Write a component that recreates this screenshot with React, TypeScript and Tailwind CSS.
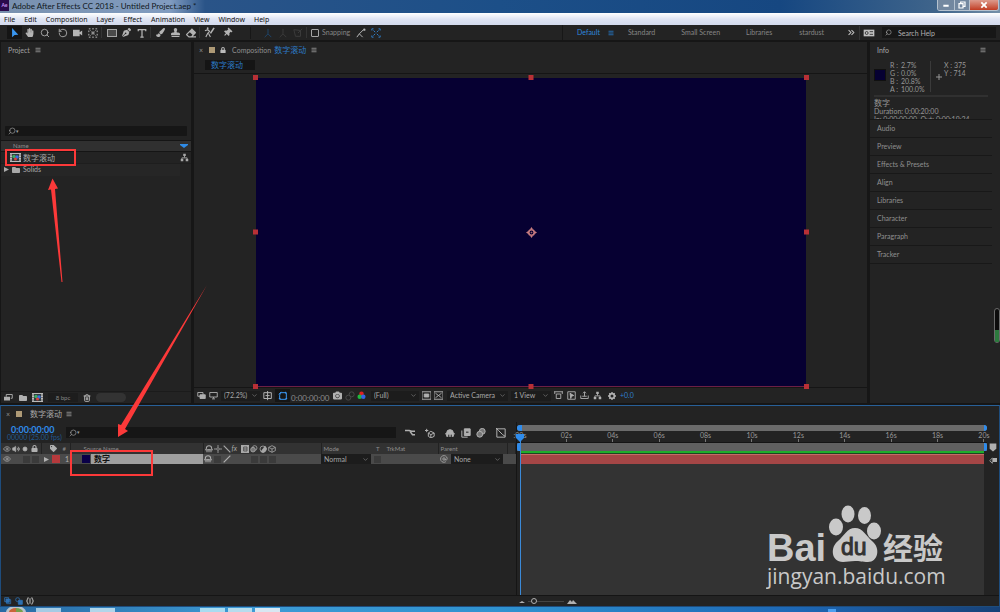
import type { ReactNode } from 'react';
import { ChevronDown, Eye, RotateCcw, Search, Trash2, Volume2 } from 'lucide-react';
import {
  FaCamera,
  FaEraser,
  FaFolder,
  FaHandPaper,
  FaLock,
  FaPaintBrush,
  FaPenNib,
  FaStamp,
  FaTag,
  FaThumbtack,
} from 'react-icons/fa';

const menus = ['File', 'Edit', 'Composition', 'Layer', 'Effect', 'Animation', 'View', 'Window', 'Help'];
const sidePanels = ['Audio', 'Preview', 'Effects & Presets', 'Align', 'Libraries', 'Character', 'Paragraph', 'Tracker'];
const rulerMarks = [':00s', '02s', '04s', '06s', '08s', '10s', '12s', '14s', '16s', '18s', '20s'];
const channels = [
  ['R', '2.7%'],
  ['G', '0.0%'],
  ['B', '20.8%'],
  ['A', '100.0%'],
];

type IconProps = { children: ReactNode; className?: string };

// Small 12x12 line glyph in the current colour
const Glyph = ({ children, className = 'size-[10px]' }: IconProps) => (
  <svg viewBox="0 0 12 12" className={`${className} shrink-0`} fill="none" stroke="currentColor" strokeWidth="1.2">
    {children}
  </svg>
);

const MenuLines = ({ className = 'text-[#858585]' }: { className?: string }) => (
  <Glyph className={`size-[6px] ${className}`}>
    <path d="M1 2.5h10M1 6h10M1 9.5h10" strokeWidth="2" />
  </Glyph>
);

const CompIcon = ({ className = 'h-[9px] w-[11px]' }: { className?: string }) => (
  <svg viewBox="0 0 22 18" className={`${className} shrink-0`}>
    <rect width="22" height="18" fill="#b9b9b9" />
    <rect x="4" y="2" width="14" height="14" fill="#303b3e" />
    <path d="M1 3h2v2H1zM1 8h2v2H1zM1 13h2v2H1zM19 3h2v2h-2zM19 8h2v2h-2zM19 13h2v2h-2z" fill="#333" />
    <circle cx="8" cy="7" r="3.5" fill="#3cac61" />
    <circle cx="14" cy="8" r="3.5" fill="#396fe0" />
    <circle cx="11" cy="12" r="3" fill="#d9423c" />
  </svg>
);

const TreeIcon = () => (
  <Glyph className="size-[9px]">
    <path d="M6 3v3M2.5 9V6.5h7V9" />
    <path d="M4.3 1h3.4v3H4.3zM1 8h3.4v3H1zM7.6 8H11v3H7.6z" fill="currentColor" stroke="none" />
  </Glyph>
);

const ToolButton = ({ label, children, active }: { label: string; children: ReactNode; active?: boolean }) => (
  <button
    aria-label={label}
    className={`flex h-[13px] w-[15px] shrink-0 items-center justify-center ${active ? 'bg-[#151515] text-[#3a96f0]' : ''}`}
  >
    {children}
  </button>
);

const Divider = () => <span className="mx-px h-[11px] w-px bg-[#343434]" />;

const Dropdown = ({ label, value, className }: { label: string; value: string; className: string }) => (
  <label className={`relative flex h-[10px] shrink-0 items-center bg-[#1c1c1c] text-[#a8a8a8] ${className}`}>
    <select aria-label={label} className="h-full w-full appearance-none bg-transparent pl-[3px] leading-none outline-none">
      <option>{value}</option>
    </select>
    <ChevronDown className="pointer-events-none absolute right-[2px] size-[7px] text-[#8a8a8a]" />
  </label>
);

const TitleBar = () => (
  <header className="flex h-[13px] items-start justify-between bg-[linear-gradient(90deg,#7890ae_0,#819cc0_170px,#2a5488_205px,#1c4f88_50%,#164781_78%,#40658b_94%,#7590a9_100%)]">
    <div className="flex items-center gap-[3px] text-[#101820]">
      <span className="flex h-[11px] w-[9px] items-center justify-center bg-[#2a0b4c] text-[5px] font-bold text-[#c896f5]">
        Ae
      </span>
      <h1 className="pt-[2px] text-[8px] leading-[9px]">Adobe After Effects CC 2018 - Untitled Project.aep *</h1>
    </div>
    <div className="mr-px flex h-[11px] overflow-hidden rounded-b-[3px] border border-t-0 border-[#b5c2cf] text-white">
      <button aria-label="Minimize" className="flex w-[17px] items-center justify-center border-r border-[#b5c2cf] bg-[#7388a0]">
        <Glyph className="size-[8px]">
          <path d="M2 7h8" strokeWidth="3" />
        </Glyph>
      </button>
      <button aria-label="Restore" className="flex w-[15px] items-center justify-center border-r border-[#b5c2cf] bg-[#7388a0]">
        <Glyph className="size-[8px]">
          <path d="M4 4V1.5h6.5V8H8M1.5 4h6v6.5h-6z" strokeWidth="1.8" />
        </Glyph>
      </button>
      <button aria-label="Close" className="flex w-[28px] items-center justify-center bg-linear-to-b from-[#dc9a8c] to-[#c03a20]">
        <Glyph className="size-[8px]">
          <path d="M2 2l8 8M10 2l-8 8" strokeWidth="2.6" />
        </Glyph>
      </button>
    </div>
  </header>
);

const MenuBar = () => (
  <nav className="flex h-[12px] items-center gap-[9px] bg-linear-to-b from-white via-[#dfe4f3] to-[#d3daed] pl-[4px] font-['Noto_Sans'] text-[7px] text-[#111]">
    {menus.map((menu) => (
      <button key={menu}>{menu}</button>
    ))}
  </nav>
);

const Toolbar = () => (
  <div className="flex h-[15px] items-center bg-[#232323] text-[#b4b4b4]">
    <div className="flex items-center pl-[7px]">
      <ToolButton label="Selection" active>
        <Glyph>
          <path d="M2.5 0v11l3-2.7L10 8z" fill="currentColor" stroke="none" />
        </Glyph>
      </ToolButton>
      <ToolButton label="Hand">
        <FaHandPaper className="size-[9px]" />
      </ToolButton>
      <ToolButton label="Zoom">
        <Search className="size-[10px]" />
      </ToolButton>
    </div>
    <div className="ml-[3px] flex items-center">
      <ToolButton label="Rotate">
        <RotateCcw className="size-[10px]" />
      </ToolButton>
      <ToolButton label="Camera">
        <Glyph className="h-[10px] w-[12px]">
          <path d="M0 2h8v3l3-2v6L8 7v3H0z" fill="currentColor" stroke="none" />
        </Glyph>
      </ToolButton>
      <ToolButton label="Pan Behind">
        <Glyph>
          <rect x="1" y="1" width="10" height="10" strokeDasharray="2 2" />
          <path d="M6 4v4M4 6h4M3 3l1 1M9 3L8 4M3 9l1-1M9 9L8 8" />
        </Glyph>
      </ToolButton>
    </div>
    <Divider />
    <div className="flex items-center pl-px">
      <ToolButton label="Rectangle">
        <span className="h-[8px] w-[10px] border border-[#a5a5a5] bg-[#4a4a4a]" />
      </ToolButton>
      <ToolButton label="Pen">
        <FaPenNib className="size-[9px]" />
      </ToolButton>
      <ToolButton label="Type">
        <Glyph>
          <path d="M1.5 4V1.8h9V4M6 1.8V11M4 10.8h4" strokeWidth="1.5" />
        </Glyph>
      </ToolButton>
    </div>
    <Divider />
    <div className="flex items-center pl-px">
      <ToolButton label="Brush">
        <FaPaintBrush className="size-[9px]" />
      </ToolButton>
      <ToolButton label="Clone Stamp">
        <FaStamp className="size-[9px]" />
      </ToolButton>
      <ToolButton label="Eraser">
        <FaEraser className="size-[10px]" />
      </ToolButton>
    </div>
    <Divider />
    <div className="flex items-center gap-[3px] pl-px">
      <ToolButton label="Roto Brush">
        <Glyph className="size-[11px]">
          <path d="M1 4l3-1 2 2-2 2-2 4M5 7l2 4M4 3l2 1" />
          <path d="M11 1L7 7" strokeWidth="1.8" />
          <circle cx="4" cy="1.3" r="1" fill="currentColor" stroke="none" />
        </Glyph>
      </ToolButton>
      <ToolButton label="Puppet Pin">
        <FaThumbtack className="size-[9px] rotate-45" />
      </ToolButton>
    </div>
    <span className="ml-[15px] h-[12px] w-px bg-[#171717]" />
    <div className="ml-[9px] flex text-[#3b3b3b]">
      <span className="text-[#1f4469]">
        <ToolButton label="Local Axis">
          <Glyph>
            <path d="M6 1v6L2 11M6 7l4 4" />
          </Glyph>
        </ToolButton>
      </span>
      <ToolButton label="World Axis">
        <Glyph>
          <path d="M6 1v6L2 11M6 7l4 4" />
        </Glyph>
      </ToolButton>
      <ToolButton label="View Axis">
        <Glyph>
          <path d="M1 2l8 1v7H3zM11 1L6 6" />
        </Glyph>
      </ToolButton>
    </div>
    <Divider />
    <label className="ml-[3px] flex items-center gap-[3px] text-[#858585]">
      <input type="checkbox" className="size-[8px] appearance-none rounded-[1px] border border-[#a5a5a5]" />
      Snapping
    </label>
    <div className="ml-[3px] flex">
      <ToolButton label="Snap Edges">
        <Glyph>
          <path d="M1 11l3-4 4 4M4 7l5-5" />
          <circle cx="10" cy="2" r="1.4" fill="currentColor" stroke="none" />
        </Glyph>
      </ToolButton>
      <span className="text-[#2f7cc6]">
        <ToolButton label="Snap Collapse">
          <Glyph>
            <path d="M1 3V1h2M9 1h2v2M11 9v2H9M3 11H1V9M3 3l2 2M9 3L7 5M3 9l2-2M9 9L7 7" />
          </Glyph>
        </ToolButton>
      </span>
    </div>
    <div className="ml-auto flex items-center text-[#858585]">
      <span className="h-[15px] w-px bg-[#171717]" />
      <button className="ml-[14px] text-[#2f88de]">Default</button>
      <MenuLines className="ml-[8px] text-[#2469a9]" />
      <button className="ml-[14px]">Standard</button>
      <button className="ml-[26px]">Small Screen</button>
      <button className="ml-[26px]">Libraries</button>
      <button className="ml-[27px]">stardust</button>
      <button aria-label="More workspaces" className="ml-[24px] text-[#c0c0c0]">
        <Glyph className="size-[7px]">
          <path d="M1 2l4 4-4 4M6 2l4 4-4 4" strokeWidth="1.8" />
        </Glyph>
      </button>
      <span className="mr-[3px] ml-[4px] h-[14px] w-px bg-[#353535]" />
      <Glyph className="h-[8px] w-[12px] text-[#c0c0c0]">
        <path d="M-2 1h16v10H-2z" fill="currentColor" stroke="none" />
        <circle cx="2.5" cy="6" r="2.2" stroke="#232323" />
        <path d="M7 4h5M7 8h5" stroke="#232323" />
      </Glyph>
      <label className="mr-[4px] ml-[7px] flex h-[11px] w-[114px] items-center gap-[6px] bg-[#171717] pl-[3px] text-[#b0b0b0]">
        <Search className="size-[7px] -scale-x-100" />
        <input aria-label="Search Help" placeholder="Search Help" className="w-20 bg-transparent placeholder:text-[#b0b0b0]" />
      </label>
    </div>
  </div>
);

const ProjectPanel = () => (
  <section className="flex w-[190px] shrink-0 flex-col bg-[#232323]">
    <div className="flex h-[16px] items-center gap-[5px] pl-[7px] text-[#a0a0a0]">
      <h2>Project</h2>
      <MenuLines />
    </div>
    <label className="mx-[4px] mt-[68px] mb-[4px] flex h-[10px] items-center rounded-[1px] bg-[#161616] pl-[3px]">
      <Search className="size-[8px] -scale-x-100 text-[#a0a0a0]" />
      <span className="text-[5px] text-[#a0a0a0]">▾</span>
      <input aria-label="Search project" className="min-w-0 flex-1 bg-transparent" />
    </label>
    <table className="w-full border-collapse border-t border-[#151515]">
      <thead>
        <tr className="h-[11px] border-b border-[#151515] bg-[#303030] text-left text-[6px] text-[#909090]">
          <th className="p-0 pl-[12px] font-normal">Name</th>
          <th className="w-[11px] p-0 text-[#2f8be6]">
            <svg viewBox="0 0 8 4" className="h-[4px] w-[8px]">
              <path d="M0 0h8v1L4 4 0 1z" fill="currentColor" />
            </svg>
          </th>
        </tr>
      </thead>
      <tbody className="text-[#a8a8a8]">
        <tr className="h-[12px] border-b border-[#1e1e1e]">
          <td className="p-0">
            <div className="flex items-center gap-[2px] pl-[9px]">
              <CompIcon />
              <span className="text-[8px]">数字滚动</span>
            </div>
          </td>
          <td className="p-0">
            <TreeIcon />
          </td>
        </tr>
        <tr className="h-[12px] bg-[#262626]">
          <td className="p-0">
            <div className="flex items-center gap-[3px] pl-[3px]">
              <Glyph className="size-[5px]">
                <path d="M0 0l12 6-12 6z" fill="currentColor" stroke="none" />
              </Glyph>
              <FaFolder className="size-[8px]" />
              <span>Solids</span>
            </div>
          </td>
          <td className="bg-[#232323] p-0" />
        </tr>
      </tbody>
    </table>
    <div className="mt-auto flex h-[12px] items-center gap-[5px] border-t border-[#1b1b1b] pl-[2px] text-[#b0b0b0]">
      <button aria-label="Interpret Footage">
        <Glyph className="h-[9px] w-[11px]">
          <path d="M3 5V2h8v5H9" />
          <path d="M0 5h8v5H0z" fill="currentColor" stroke="none" />
        </Glyph>
      </button>
      <button aria-label="New Folder">
        <FaFolder className="size-[8px]" />
      </button>
      <button aria-label="New Composition">
        <CompIcon />
      </button>
      <button className="h-[9px] w-[30px] bg-[#1d1d1d] text-[6px] text-[#858585]">8 bpc</button>
      <button aria-label="Delete">
        <Trash2 className="size-[8px]" strokeWidth={3} />
      </button>
      <span className="h-[9px] w-[30px] rounded-full bg-[#333]" />
    </div>
  </section>
);

const Handle = ({ className }: { className: string }) => <span className={`absolute size-[5px] bg-[#b83036] ${className}`} />;

const CompositionPanel = () => (
  <section className="flex min-w-0 flex-1 flex-col bg-[#232323]">
    <div className="flex h-[16px] items-center pl-[5px] text-[#909090]">
      <button aria-label="Close composition">×</button>
      <span className="ml-[6px] size-[6px] bg-[#ae9a76]" />
      <FaLock className="mr-[6px] ml-[5px] size-[6px] text-[#bbb]" />
      <h2>Composition</h2>
      <span className="mr-[5px] ml-[3px] text-[8px] text-[#2c7ac6]">数字滚动</span>
      <MenuLines />
    </div>
    <div className="h-[15px] pt-[2px] pl-[11px]">
      <button className="h-[10px] w-[50px] bg-[#151515] pr-[6px] text-[8px] text-[#2c7ac6]">数字滚动</button>
    </div>
    <div className="border-y border-[#151515] pt-[4px] pr-[61px] pl-[62px]">
      <div className="relative flex aspect-[550/309] items-center justify-center border-b border-[#6b1f45] bg-[#060032]">
        <Handle className="-top-[3px] -left-[3px]" />
        <Handle className="-top-[3px] left-1/2 -translate-x-1/2" />
        <Handle className="-top-[3px] -right-[3px]" />
        <Handle className="top-1/2 -left-[3px] -translate-y-1/2" />
        <Handle className="top-1/2 -right-[3px] -translate-y-1/2" />
        <Handle className="-bottom-[3px] -left-[3px]" />
        <Handle className="-bottom-[3px] left-1/2 -translate-x-1/2" />
        <Handle className="-right-[3px] -bottom-[3px]" />
        <Glyph className="size-[11px] text-[#c87c80]">
          <circle cx="6" cy="6" r="3" strokeWidth="1.8" />
          <path d="M6 0l1.6 2.5H4.4zM6 12l1.6-2.5H4.4zM0 6l2.5 1.6V4.4zM12 6L9.5 7.6V4.4z" fill="currentColor" stroke="none" />
          <path d="M6 5v2M5 6h2" strokeWidth="0.6" />
        </Glyph>
      </div>
    </div>
    <div className="flex flex-1 items-center overflow-hidden text-[#b0b0b0]">
      <ToolButton label="Always Preview">
        <Glyph className="size-[9px]">
          <path d="M1 2h7v5H1z" />
          <path d="M4 5h7v5H4z" fill="currentColor" />
        </Glyph>
      </ToolButton>
      <button aria-label="Primary Viewer" className="mr-[3px]">
        <Glyph className="size-[9px]">
          <path d="M1 2h10v6H1zM4 10.5h4M6 8v2" />
        </Glyph>
      </button>
      <Dropdown label="Magnification" value="(72.2%)" className="w-[39px]" />
      <ToolButton label="Grid Options">
        <Glyph>
          <path d="M1 2h9v7H1zM5.5 0v11M3 5.5h5" />
        </Glyph>
      </ToolButton>
      <ToolButton label="Mask Visibility" active>
        <Glyph>
          <path d="M3 2h7v8H2V5zM1 4l3-3M9 1v2M1 9h2M9 9h2" />
        </Glyph>
      </ToolButton>
      <button className="ml-px h-full w-[37px] pt-[4px] text-[8px] text-[#8b8b8b]">0:00:00:00</button>
      <span className="ml-[2px]">
        <ToolButton label="Snapshot">
          <FaCamera className="size-[9px]" />
        </ToolButton>
      </span>
      <span className="text-[#484848]">
        <Glyph>
          <circle cx="4" cy="8" r="3" />
          <circle cx="8" cy="4" r="3" />
        </Glyph>
      </span>
      <button aria-label="Channels" className="ml-[2px]">
        <svg viewBox="0 0 10 10" className="size-[9px]">
          <circle cx="5" cy="3" r="2.5" fill="#e02020" />
          <circle cx="3" cy="6.5" r="2.5" fill="#21b83e" />
          <circle cx="7" cy="6.5" r="2.5" fill="#3465e2" />
        </svg>
      </button>
      <span className="ml-[5px]">
        <Dropdown label="Resolution" value="(Full)" className="w-[48px]" />
      </span>
      <ToolButton label="Region of Interest">
        <Glyph className="size-[9px]">
          <path d="M0 1h12v10H0z" />
          <path d="M3 4h6v4H3z" fill="currentColor" />
        </Glyph>
      </ToolButton>
      <button aria-label="Transparency Grid" className="mr-[4px]">
        <Glyph className="size-[9px]">
          <path d="M0 1h12v10H0zM2 3l8 6M10 3L2 9" />
        </Glyph>
      </button>
      <Dropdown label="3D View" value="Active Camera" className="w-[61px]" />
      <span className="ml-[3px]">
        <Dropdown label="View Layout" value="1 View" className="w-[40px]" />
      </span>
      <span className="ml-[3px] flex gap-[4px]">
        <Glyph className="size-[9px]">
          <path d="M0 1h12M3 4h6v6H3zM1 1v3M11 1v3" />
        </Glyph>
        <Glyph className="size-[9px]">
          <path d="M1 1h10v10H1z" />
          <path d="M4 3l5 3-3 1-1 3z" fill="currentColor" />
        </Glyph>
        <Glyph className="size-[9px]">
          <path d="M1 6v4h10V6M3 7h6M6 1v6M4 3l2-2 2 2" />
        </Glyph>
        <TreeIcon />
      </span>
      <Glyph className="ml-[6px] size-[8px]">
        <circle cx="6" cy="6" r="3.5" strokeWidth="2.5" />
        <path d="M6 0v2M6 10v2M0 6h2M10 6h2M2 2l1 1M9 9l1 1M10 2L9 3M3 9l-1 1" strokeWidth="2" />
      </Glyph>
      <button className="ml-[4px] text-[#2f7fd0]">+0.0</button>
    </div>
  </section>
);

const InfoPanel = () => (
  <section className="relative flex w-[130px] shrink-0 flex-col bg-[#232323]">
    <div className="flex h-[16px] items-center justify-between pr-[14px] pl-[7px] text-[#a8a8a8]">
      <h2>Info</h2>
      <MenuLines />
    </div>
    <div className="mr-[8px] h-[62px] overflow-hidden border-b border-[#181818] px-[4px] pt-[3px] text-[#969696]">
      <div className="flex h-[34px] items-start leading-[8px]">
        <span className="mt-[8px] size-[12px] border border-[#101010] bg-[#060032]" />
        <dl className="ml-[4px] grid grid-cols-[11px_29px]">
          {channels.map(([name, value]) => (
            <div key={name} className="contents">
              <dt>{name} :</dt>
              <dd>{value}</dd>
            </div>
          ))}
        </dl>
        <span className="h-[31px] w-px bg-[#3a3a3a]" />
        <Glyph className="mt-[13px] ml-[5px] size-[6px]">
          <path d="M6 0v12M0 6h12" strokeWidth="2" />
        </Glyph>
        <p className="ml-[2px]">
          X : 375
          <br />Y : 714
        </p>
      </div>
      <div className="border-t-2 border-[#303030] pt-[2px] leading-[8px]">
        <p className="text-[8px]">数字</p>
        <p>Duration: 0:00:20:00</p>
        <p>In: 0:00:00:00, Out: 0:00:19:24</p>
      </div>
    </div>
    {sidePanels.map((panel) => (
      <h3 key={panel} className="mr-[8px] flex h-[18px] items-center border-b border-[#181818] pl-[7px] text-[#909090]">
        {panel}
      </h3>
    ))}
    <div className="absolute right-0 bottom-[60px] flex h-[35px] w-[6px] items-end rounded-full border border-[#6b6b6b] bg-[#0c0c0c]">
      <span className="h-[12px] w-full bg-[#2d7a3e]" />
    </div>
  </section>
);

const SwitchBox = () => <span className="size-[7px] bg-[#3b3b3b]" />;

const ShyIcon = () => (
  <Glyph className="size-[8px]">
    <path d="M2 6V5a4 4 0 018 0v1M0 7h12M3 8v3M9 8v3M6 6v5" strokeWidth="1.6" />
  </Glyph>
);

const LayerTable = () => (
  <table className="w-full table-fixed border-collapse">
    <colgroup>
      <col className="w-[40px]" />
      <col className="w-[29px]" />
      <col className="w-[133px]" />
      <col className="w-[118px]" />
      <col className="w-[53px]" />
      <col className="w-[64px]" />
      <col className="w-[69px]" />
      <col />
    </colgroup>
    <thead>
      <tr className="h-[11px] bg-[#323232] text-left text-[6px] text-[#8f8f8f] [&>th]:border-r [&>th]:border-[#222] [&>th]:p-0 [&>th]:font-normal">
        <th>
          <div className="flex items-center gap-px pl-[2px] text-[#b0b0b0]">
            <Eye className="size-[8px]" />
            <Volume2 className="size-[8px]" fill="currentColor" />
            <Glyph className="size-[8px]">
              <circle cx="6" cy="6" r="3" fill="currentColor" />
            </Glyph>
            <FaLock className="ml-px size-[7px]" />
          </div>
        </th>
        <th>
          <div className="flex items-center gap-[6px] pl-[8px]">
            <FaTag className="size-[7px] text-[#b0b0b0]" />#
          </div>
        </th>
        <th>
          <span className="pl-[13px]">Source Name</span>
        </th>
        <th>
          <div className="flex items-center gap-px pl-px text-[#a8a8a8]">
            <ShyIcon />
            <Glyph className="size-[8px]">
              <circle cx="6" cy="6" r="2" />
              <path d="M6 0v3M6 9v3M0 6h3M9 6h3" />
            </Glyph>
            <Glyph className="size-[8px]">
              <path d="M1 1l10 10" strokeWidth="1.8" />
            </Glyph>
            <span className="w-[8px] text-[7px] italic">fx</span>
            <Glyph className="size-[8px]">
              <path d="M0 0h12v12H0z" fill="currentColor" stroke="none" />
              <path d="M4 3h5v6H4zM4 6h5" stroke="#444" />
            </Glyph>
            <Glyph className="size-[8px]">
              <circle cx="7" cy="4.5" r="3.5" />
              <circle cx="4.5" cy="7" r="3.5" fill="#777" />
            </Glyph>
            <Glyph className="size-[8px]">
              <circle cx="6" cy="6" r="4.5" />
              <path d="M9 2a5 5 0 01-6 8z" fill="currentColor" />
            </Glyph>
            <Glyph className="size-[8px]">
              <path d="M6 1l5 2.5v5L6 11 1 8.5v-5zM1 3.5L6 6l5-2.500M6 6v5" />
            </Glyph>
          </div>
        </th>
        <th className="border-r-0!">
          <span className="pl-[2px]">Mode</span>
        </th>
        <th>
          <span className="pl-[2px]">T</span>
          <span className="pl-[7px]">TrkMat</span>
        </th>
        <th>
          <span className="pl-[2px]">Parent</span>
        </th>
        <th />
      </tr>
    </thead>
    <tbody>
      <tr className="h-[10px] bg-[#4a4a4a] text-[#b0b0b0] [&>td]:p-0">
        <td>
          <div className="flex items-center gap-[2px] pl-[2px]">
            <Eye className="mr-[10px] size-[8px]" />
            <SwitchBox />
            <SwitchBox />
          </div>
        </td>
        <td>
          <div className="flex items-center pl-[3px]">
            <Glyph className="size-[5px]">
              <path d="M0 0l12 6-12 6z" fill="currentColor" stroke="none" />
            </Glyph>
            <span className="mr-[5px] ml-[3px] size-[8px] bg-[#b5393c]" />1
          </div>
        </td>
        <td>
          <div className="flex h-[10px] items-center pl-[12px]">
            <span className="size-[8px] bg-[#0a0048]" />
            <span className="ml-px flex h-full flex-1 items-center bg-[#9f9f9f] pl-[3px] text-[8px] font-bold text-[#111]">数字</span>
          </div>
        </td>
        <td>
          <div className="flex items-center gap-[2px] pl-px">
            <ShyIcon />
            <SwitchBox />
            <Glyph className="mr-[18px] size-[8px]">
              <path d="M1 11L11 1" strokeWidth="1.8" />
            </Glyph>
            <SwitchBox />
            <SwitchBox />
            <SwitchBox />
          </div>
        </td>
        <td>
          <Dropdown label="Blending Mode" value="Normal" className="w-[50px]" />
        </td>
        <td>
          <div className="flex">
            <SwitchBox />
          </div>
        </td>
        <td>
          <div className="flex items-center gap-[3px] pl-[2px]">
            <Glyph className="size-[8px]">
              <circle cx="6" cy="6" r="1.8" />
              <path d="M7.800 6c0 3 3 2 3-1a5 5 0 10-2 5" />
            </Glyph>
            <Dropdown label="Parent" value="None" className="w-[52px]" />
          </div>
        </td>
        <td />
      </tr>
    </tbody>
  </table>
);

const TimelinePanel = () => (
  <section className="flex flex-1 flex-col border border-[#1e4c7c] border-t-[#286098] bg-[#232323]">
    <div className="flex h-[16px] items-center pl-[5px] text-[#909090]">
      <button aria-label="Close timeline">×</button>
      <span className="mr-[8px] ml-[6px] size-[6px] bg-[#ae9a76]" />
      <h2 className="mr-[4px] text-[8px] text-[#a8a8a8]">数字滚动</h2>
      <MenuLines />
    </div>
    <div className="flex flex-1">
      <div className="flex w-[515px] shrink-0 flex-col">
        <div className="flex h-[21px] items-center">
          <div className="w-[65px] pl-[6px] text-[#2f8cec]">
            <p className="pl-[4px] text-[9px] leading-[9px] font-bold">0:00:00:00</p>
            <p className="text-[7px] leading-[7px] whitespace-nowrap text-[#20588f]">00000 (25.00 fps)</p>
          </div>
          <label className="flex h-[11px] w-[330px] items-center bg-[#161616] pl-[3px] text-[#a0a0a0]">
            <Search className="size-[8px] -scale-x-100" />
            <span className="text-[5px]">▾</span>
            <input aria-label="Search layers" className="min-w-0 flex-1 bg-transparent" />
          </label>
          <div className="ml-[9px] flex text-[#b0b0b0]">
            <button aria-label="Mini Flowchart" className="mr-[10px]">
              <Glyph>
                <path d="M0 3h5l3 1h4M6 4l3 4h3" strokeWidth="1.8" />
              </Glyph>
            </button>
            <button aria-label="Draft 3D" className="mr-[10px]">
              <Glyph>
                <path d="M0 3h4M2 1v4M7 4l4 2v4l-4 2-3-2V6zM4 6l3 2 4-2M7 8v4" />
              </Glyph>
            </button>
            <button aria-label="Shy" className="mr-[6px]">
              <Glyph>
                <path d="M2 6a4 4 0 018 0v4H2z" fill="currentColor" />
                <path d="M0 7h12" />
                <path d="M4.500 8v4M7.500 8v4" stroke="#232323" />
              </Glyph>
            </button>
            <button aria-label="Frame Blending" className="mr-[5px]">
              <Glyph>
                <path d="M4 1h7v8H4z" fill="currentColor" />
                <path d="M1 3v8h7" />
                <path d="M6 5h3" stroke="#232323" />
              </Glyph>
            </button>
            <button aria-label="Motion Blur" className="mr-[10px]">
              <Glyph>
                <circle cx="7.5" cy="4" r="3.5" fill="#777" />
                <circle cx="4.5" cy="7.5" r="3.5" fill="#777" />
              </Glyph>
            </button>
            <button aria-label="Graph Editor">
              <Glyph>
                <path d="M1 1h10v10H1zM0 0l3 3 5 5 3 2" />
              </Glyph>
            </button>
          </div>
        </div>
        <LayerTable />
      </div>
      <div className="flex flex-1 flex-col border-l border-[#151515]">
        <div className="mt-[3px] flex h-[6px] justify-between rounded-full bg-[#6b6b6b]">
          <span className="w-[5px] rounded-l-full bg-[#2f8cec]" />
          <span className="w-[3px] rounded-r-full bg-[#2f8cec]" />
        </div>
        <div className="flex h-[11px] justify-between px-[3px] text-[#999]">
          {rulerMarks.map((mark) => (
            <div key={mark} className="flex w-0 flex-col items-center justify-end">
              <span className="leading-[8px]">{mark}</span>
              <span className="h-[3px] w-px bg-[#777]" />
            </div>
          ))}
        </div>
        <div className="flex h-[9px] justify-between border-t border-[#151515] bg-[#606060]">
          <span className="w-[3px] rounded-l-[2px] bg-[#2f8cec]" />
          <span className="w-[3px] rounded-r-[2px] bg-[#2f8cec]" />
        </div>
        <div className="relative mx-[3px] flex flex-1 flex-col bg-[#333]">
          <div className="h-[3px] border-b border-[#1f4423] bg-[#1fae2b]" />
          <div className="h-[10px] border-t border-[#c56d66] bg-[#a54646]" />
          <div className="absolute -top-[10px] bottom-0 left-0 w-px bg-[#3b8ad8]" />
          <svg viewBox="0 0 8 8" className="absolute -top-[17px] -left-[4px] size-[8px]">
            <path d="M0 0h8v4L4 8 0 4z" fill="#2f8cec" />
          </svg>
        </div>
      </div>
      <div className="flex w-[12px] flex-col items-center gap-[4px] pt-[21px] text-[#b0b0b0]">
        <Glyph className="h-[9px] w-[8px]">
          <path d="M1 0h10v8l-5 4-5-4z" fill="currentColor" stroke="none" />
        </Glyph>
        <Glyph className="size-[8px]">
          <path d="M1 7l4-4v8z" />
          <path d="M6 3h6v6H6z" fill="currentColor" stroke="none" />
        </Glyph>
      </div>
    </div>
    <div className="flex h-[11px] items-center border-t border-[#151515] text-[#2d70b2]">
      <div className="flex w-[515px] gap-[3px] pl-[3px]">
        <Glyph className="size-[8px]">
          <path d="M1 1h6v6H1zM4 4h6v6H4z" />
          <path d="M3 3h5v5H3z" fill="currentColor" />
        </Glyph>
        <Glyph className="size-[8px]">
          <circle cx="4" cy="4" r="3" />
          <path d="M5 5h6v6H5z" fill="currentColor" />
        </Glyph>
        <Glyph className="size-[8px] text-[#999]">
          <path d="M4 1C1 2 3 5 1 6c2 1 0 4 3 5M8 1c3 1 1 4 3 5-2 1 0 4-3 5M6 2v8" strokeWidth="2" />
        </Glyph>
      </div>
      <svg viewBox="0 0 6 3" className="ml-[3px] h-[3px] w-[6px]">
        <path d="M0 3l3-2 3 2z" fill="#b0b0b0" />
      </svg>
      <input
        type="range"
        aria-label="Timeline zoom"
        min="0"
        max="100"
        defaultValue="10"
        className="mx-[3px] h-[6px] w-[36px] appearance-none bg-[linear-gradient(#444,#444)] bg-[length:100%_1px] bg-center bg-no-repeat [&::-webkit-slider-thumb]:size-[6px] [&::-webkit-slider-thumb]:appearance-none [&::-webkit-slider-thumb]:rounded-full [&::-webkit-slider-thumb]:border [&::-webkit-slider-thumb]:border-[#b0b0b0] [&::-webkit-slider-thumb]:bg-[#232323]"
      />
      <svg viewBox="0 0 10 5" className="h-[5px] w-[10px]">
        <path d="M0 5l3-4 2 2 1-2 4 4z" fill="#b0b0b0" />
      </svg>
    </div>
  </section>
);

const Taskbar = () => (
  <footer className="flex h-[5px] items-end bg-[linear-gradient(90deg,#286aa4_0,#3d9bd5_25%,#2f92d0_50%,#1d67b5_80%,#174177_100%)]">
    <svg viewBox="0 0 20 5" className="ml-[6px] h-[5px] w-[20px]">
      <path d="M0 5a10 6 0 0120 0z" fill="#b9c4cc" />
      <path d="M3 5a7 4 0 017-4v4z" fill="#c9663a" />
      <path d="M10 1a7 4 0 017 4h-7z" fill="#76a04b" />
    </svg>
    <span className="ml-[10px] h-[4px] w-[25px] bg-[#a5cbe4]" />
    <span className="ml-[29px] h-[4px] w-[25px] bg-[#b1d6ea]" />
    <span className="ml-[85px] h-[4px] w-[25px] bg-[#a9dcf0]" />
    <span className="ml-[3px] h-[4px] w-[24px] bg-[#b5dced]" />
    <span className="ml-[3px] h-[4px] w-[25px] bg-[#d7e7f2]" />
    <span className="mr-[164px] ml-auto h-[3px] w-[8px] bg-[#4ba0f0]" />
  </footer>
);

const Annotations = () => (
  <svg width="220" height="480" className="pointer-events-none absolute top-0 left-0" fill="none" stroke="#fc3939" strokeWidth="2">
    <rect x="6" y="150" width="69" height="15" />
    <rect x="71" y="451" width="81" height="24" />
    <path d="M52.5 178.500L48 190l3-.5 10.500 92.500h1L55 189l3-.5z" fill="#fc3939" stroke="none" />
    <path d="M207 285L121 425l-3-1v13l10-6-3-2z" fill="#fc3939" stroke="none" />
  </svg>
);

const Watermark = () => (
  <svg viewBox="0 0 184 90" className="pointer-events-none absolute right-[50px] bottom-[18px] h-[90px] w-[184px]" fill="#c9c9c9">
    <text x="1" y="57" className="font-['Liberation_Sans'] text-[38px] font-bold">
      Bai
    </text>
    <ellipse cx="70" cy="23" rx="7" ry="8.5" />
    <ellipse cx="82" cy="10" rx="6.5" ry="8.5" />
    <ellipse cx="98.5" cy="11.5" rx="6.5" ry="8.5" />
    <ellipse cx="108" cy="27" rx="7" ry="8.5" />
    <path d="M89 24c8 0 11 8 17 13 9 7 6 21-4 21-6 0-8-1-13-1s-8 1-12 1c-12 0-13-15-5-21 6-5 9-13 17-13z" />
    <text x="75" y="51" className="font-['Liberation_Sans'] text-[23px]" fill="#333" stroke="#333">
      du
    </text>
    <text x="117" y="55" className="font-['Noto_Sans_CJK_SC'] text-[30px] font-bold">
      经验
    </text>
    <text x="1" y="80" className="font-['Open_Sans'] text-[21px]">
      jingyan.baidu.com
    </text>
  </svg>
);

export default function App() {
  return (
    <div className="relative flex min-h-screen flex-col overflow-hidden bg-[#161616] font-[Lato,'Noto_Sans_CJK_SC',sans-serif] text-[7px] leading-none">
      <TitleBar />
      <MenuBar />
      <Toolbar />
      <main className="flex flex-1 flex-col gap-[2px] pt-[2px]">
        <div className="flex h-[361px] gap-[3px] pl-px">
          <ProjectPanel />
          <CompositionPanel />
          <InfoPanel />
        </div>
        <TimelinePanel />
      </main>
      <Taskbar />
      <Annotations />
      <Watermark />
    </div>
  );
}
